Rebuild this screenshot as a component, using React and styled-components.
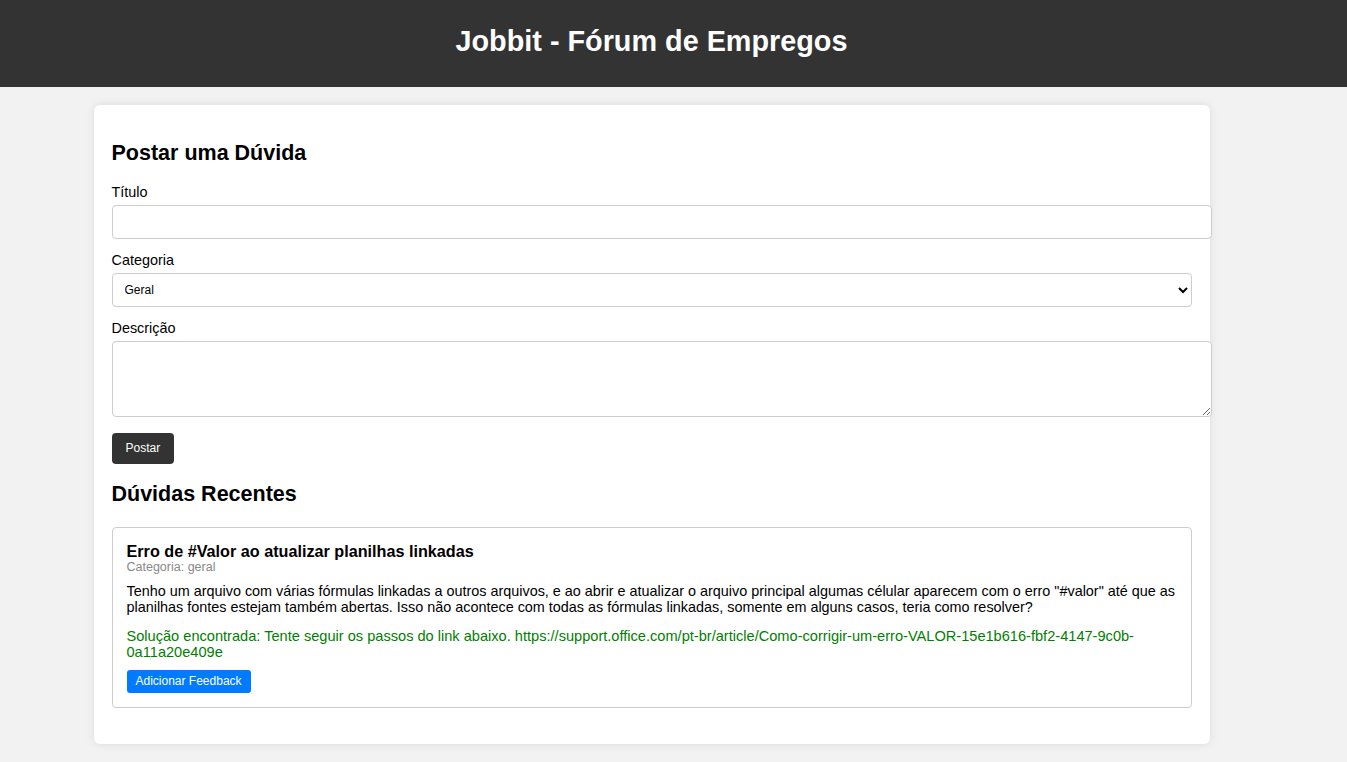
import React, { useState } from 'react';
import styled, { createGlobalStyle } from 'styled-components';

const GlobalStyle = createGlobalStyle`
  body {
    margin: 0;
    background: #f2f2f2;
    font-family: "Liberation Sans", Arial, sans-serif;
    color: #000;
  }
`;

const HeaderStyled = styled.header`
  background: #333;
  color: #fff;
  padding: 25px 0 29px;
`;

const HeaderInner = styled.div`
  width: 1303px;
  text-align: center;

  h1 {
    margin: 0;
    font-size: 28.8px;
    line-height: 33px;
    font-weight: bold;
  }
`;

const Main = styled.main`
  width: 1303px;
  padding: 18px 0 20px;
`;

const Card = styled.div`
  display: flow-root;
  width: 1116px;
  box-sizing: border-box;
  margin: 0 auto;
  background: #fff;
  border-radius: 6px;
  box-shadow: 0 0 10px rgba(0, 0, 0, 0.1);
  padding: 18px;
`;

const SectionTitle = styled.h2`
  font-size: 21.5px;
  line-height: 25px;
  font-weight: bold;
  margin: 18px 0;
`;

const Label = styled.label`
  display: block;
  font-size: 14.4px;
  line-height: 16px;
  margin-bottom: 5px;
`;

const Field = styled.div`
  margin-bottom: ${(p) => (p.$last ? '16px' : '13px')};
`;

const TextInput = styled.input`
  display: block;
  width: 100%;
  box-sizing: content-box;
  height: 16px;
  padding: 8px 9px;
  border: 1px solid #ccc;
  border-radius: 4px;
  font-family: inherit;
  font-size: 14px;
  outline: none;
`;

const Select = styled.select`
  display: block;
  width: 100%;
  height: 34px;
  box-sizing: border-box;
  padding: 0 8px;
  border: 1px solid #ccc;
  border-radius: 4px;
  background: #fff;
  font-family: inherit;
  font-size: 12px;
  color: #000;
`;

const TextArea = styled.textarea`
  display: block;
  width: 100%;
  box-sizing: content-box;
  height: 58px;
  padding: 8px 9px;
  border: 1px solid #ccc;
  border-radius: 4px;
  font-family: inherit;
  font-size: 14px;
  resize: vertical;
  outline: none;
`;

const Button = styled.button`
  display: block;
  border: none;
  border-radius: ${(p) => (p.$small ? '3px' : '4px')};
  background: ${(p) => (p.$small ? '#007bff' : '#333')};
  color: #fff;
  font-family: inherit;
  font-size: 12px;
  line-height: 15px;
  height: ${(p) => (p.$small ? '23px' : '31px')};
  padding: ${(p) => (p.$small ? '0 9px' : '0 14px')};
  cursor: pointer;
`;

const PostList = styled.div`
  display: flex;
  flex-direction: column;
  gap: 18px;
  margin: 20px 0 18px;
`;

const Post = styled.div`
  border: 1px solid #ccc;
  border-radius: 4px;
  padding: 14px;

  h3 {
    margin: 0;
    font-size: 16.2px;
    line-height: 18px;
    font-weight: bold;
  }
`;

const Meta = styled.small`
  display: block;
  font-size: 12.5px;
  line-height: 15px;
  color: #888;
`;

const Text = styled.p`
  margin: ${(p) => (p.$solution ? '0 0 10px' : '8px 0 13px')};
  font-size: ${(p) => (p.$solution ? '14.6px' : '14.4px')};
  line-height: 16px;
  color: ${(p) => (p.$solution ? 'green' : '#000')};
`;

const posts = [
  {
    id: 1,
    title: 'Erro de #Valor ao atualizar planilhas linkadas',
    category: 'geral',
    body:
      'Tenho um arquivo com várias fórmulas linkadas a outros arquivos, e ao abrir e atualizar o arquivo principal algumas célular aparecem com o erro "#valor" até que as planilhas fontes estejam também abertas. Isso não acontece com todas as fórmulas linkadas, somente em alguns casos, teria como resolver?',
    solution:
      'Solução encontrada: Tente seguir os passos do link abaixo. https://support.office.com/pt-br/article/Como-corrigir-um-erro-VALOR-15e1b616-fbf2-4147-9c0b-0a11a20e409e',
  },
];

export default function App() {
  const [title, setTitle] = useState('');
  const [category, setCategory] = useState('geral');
  const [description, setDescription] = useState('');

  return (
    <>
      <GlobalStyle />
      <HeaderStyled>
        <HeaderInner>
          <h1>Jobbit - Fórum de Empregos</h1>
        </HeaderInner>
      </HeaderStyled>
      <Main>
        <Card>
          <SectionTitle>Postar uma Dúvida</SectionTitle>
          <Field>
            <Label htmlFor="titulo">Título</Label>
            <TextInput id="titulo" value={title} onChange={(e) => setTitle(e.target.value)} />
          </Field>
          <Field>
            <Label htmlFor="categoria">Categoria</Label>
            <Select id="categoria" value={category} onChange={(e) => setCategory(e.target.value)}>
              <option value="geral">Geral</option>
              <option value="vagas">Vagas</option>
              <option value="curriculo">Currículo</option>
            </Select>
          </Field>
          <Field $last>
            <Label htmlFor="descricao">Descrição</Label>
            <TextArea id="descricao" value={description} onChange={(e) => setDescription(e.target.value)} />
          </Field>
          <Button>Postar</Button>
          <SectionTitle>Dúvidas Recentes</SectionTitle>
          <PostList>
            {posts.map((post) => (
              <Post key={post.id}>
                <h3>{post.title}</h3>
                <Meta>Categoria: {post.category}</Meta>
                <Text>{post.body}</Text>
                <Text $solution>{post.solution}</Text>
                <Button $small>Adicionar Feedback</Button>
              </Post>
            ))}
          </PostList>
        </Card>
      </Main>
    </>
  );
}
